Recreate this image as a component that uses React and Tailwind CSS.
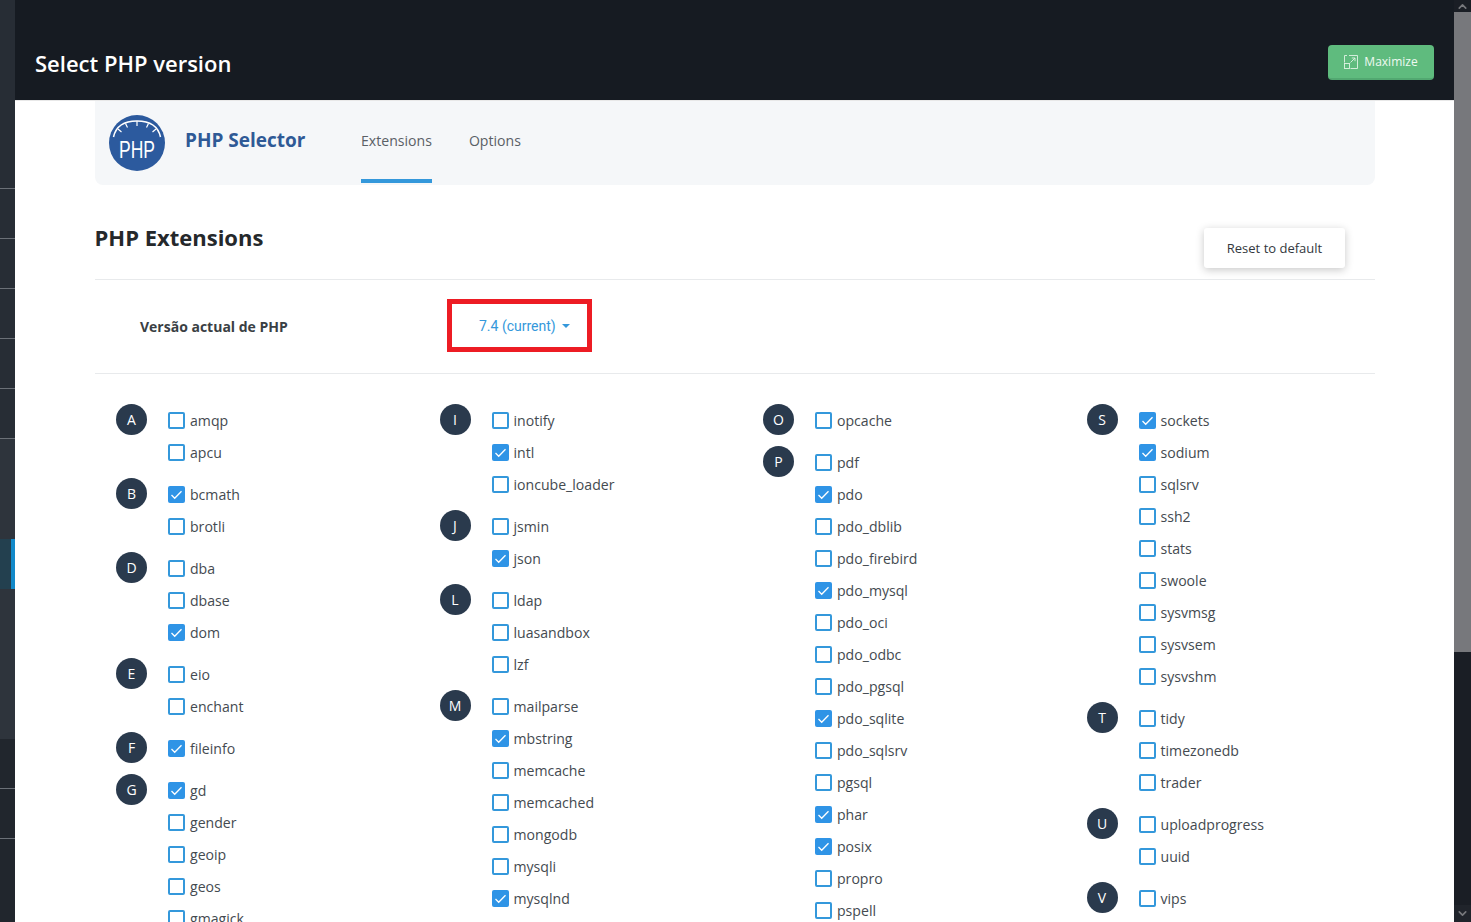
import React from 'react';
import { ChevronDown, ChevronUp } from 'lucide-react';

const columns = [
  [
    { letter: 'A', items: ['amqp', 'apcu'] },
    { letter: 'B', items: ['*bcmath', 'brotli'] },
    { letter: 'D', items: ['dba', 'dbase', '*dom'] },
    { letter: 'E', items: ['eio', 'enchant'] },
    { letter: 'F', items: ['*fileinfo'] },
    { letter: 'G', items: ['*gd', 'gender', 'geoip', 'geos', 'gmagick'] },
  ],
  [
    { letter: 'I', items: ['inotify', '*intl', 'ioncube_loader'] },
    { letter: 'J', items: ['jsmin', '*json'] },
    { letter: 'L', items: ['ldap', 'luasandbox', 'lzf'] },
    { letter: 'M', items: ['mailparse', '*mbstring', 'memcache', 'memcached', 'mongodb', 'mysqli', '*mysqlnd'] },
  ],
  [
    { letter: 'O', items: ['opcache'] },
    {
      letter: 'P',
      items: ['pdf', '*pdo', 'pdo_dblib', 'pdo_firebird', '*pdo_mysql', 'pdo_oci', 'pdo_odbc', 'pdo_pgsql', '*pdo_sqlite', 'pdo_sqlsrv', 'pgsql', '*phar', '*posix', 'propro', 'pspell'],
    },
  ],
  [
    { letter: 'S', items: ['*sockets', '*sodium', 'sqlsrv', 'ssh2', 'stats', 'swoole', 'sysvmsg', 'sysvsem', 'sysvshm'] },
    { letter: 'T', items: ['tidy', 'timezonedb', 'trader'] },
    { letter: 'U', items: ['uploadprogress', 'uuid'] },
    { letter: 'V', items: ['vips'] },
  ],
];

function Rail() {
  return (
    <div className="w-[15px] shrink-0 flex flex-col bg-[#272d35]">
      <div className="h-[189px] shrink-0 border-b border-[#6b7077]" />
      <div className="h-[50px] shrink-0 border-b border-[#6b7077]" />
      <div className="h-[50px] shrink-0 border-b border-[#6b7077]" />
      <div className="h-[50px] shrink-0 border-b border-[#6b7077]" />
      <div className="h-[50px] shrink-0 border-b border-[#6b7077]" />
      <div className="h-[50px] shrink-0 border-b border-[#6b7077]" />
      <div className="h-[300px] shrink-0 bg-[#2e343c] flex flex-col pt-[100px]">
        <div className="h-[50px] bg-[#23404f] flex justify-end">
          <div className="w-[4px] bg-[#1289c9]" />
        </div>
      </div>
      <div className="flex-1 bg-[#21262d]">
        <div className="h-[50px] border-b border-[#6b7077]" />
        <div className="h-[50px] border-b border-[#6b7077]" />
      </div>
    </div>
  );
}

function PhpLogo() {
  return (
    <svg width="56" height="56" viewBox="0 0 56 56" className="shrink-0">
      <circle cx="28" cy="28" r="28" fill="#2c5a9e" />
      <path d="M4.500 22 Q8 6 28 6 Q48 6 51.500 22" fill="none" stroke="#fff" strokeWidth="1.500" />
      <path d="M28 6v5M16.500 8.500l2 4M39.500 8.500l-2 4M9 14l3.500 3M47 14l-3.500 3" stroke="#fff" strokeWidth="1.200" />
      <text x="10" y="43" textLength="36" lengthAdjust="spacingAndGlyphs" fill="#fff" fontSize="24" fontFamily="'Liberation Sans', sans-serif">
        PHP
      </text>
    </svg>
  );
}

function Checkbox({ checked }) {
  if (checked) {
    return (
      <span className="w-[17px] h-[17px] shrink-0 rounded-[2px] bg-[#2f94e6] flex items-center justify-center">
        <svg width="15" height="15" viewBox="0 0 15 15" fill="none">
          <path d="M2.500 8l3.200 3.200 6.800-7" stroke="#fff" strokeWidth="1.300" />
        </svg>
      </span>
    );
  }
  return <span className="w-[17px] h-[17px] shrink-0 rounded-[2px] border-2 border-[#3498db] bg-white" />;
}

function Group({ letter, items }) {
  return (
    <div className="flex mb-[10px]">
      <div className="w-[31px] h-[31px] shrink-0 rounded-full bg-[#2a3a4d] text-white text-[14px] flex items-center justify-center">
        {letter}
      </div>
      <div className="ml-[21px] flex flex-col">
        {items.map((item) => {
          const checked = item.startsWith('*');
          return (
            <div key={item} className="h-8 flex items-center gap-[5px] pt-[1px] text-[14.100px] text-[#444a50]">
              <Checkbox checked={checked} />
              <span>{checked ? item.slice(1) : item}</span>
            </div>
          );
        })}
      </div>
    </div>
  );
}

export default function App() {
  return (
    <div className="h-[922px] flex overflow-hidden bg-white font-['Open_Sans',sans-serif]">
      <Rail />

      <div className="flex-1 min-w-0 flex flex-col">
        {/* Header */}
        <div className="h-[101px] shrink-0 bg-[#161b22] border-b border-[#e8e8e8] pl-[20px] pr-[20px] flex items-center justify-between">
          <h1 className="text-[22px] font-semibold text-white pt-[26px]">Select PHP version</h1>
          <button className="w-[106px] h-[35px] mt-[25px] rounded-[4px] bg-[#5fbb7e] border-b-2 border-[#52a871] flex items-center justify-center gap-[6px] text-[12px] font-normal text-[#eef9f1]">
            <svg width="14" height="14" viewBox="0 0 14 14" fill="none" stroke="#dff3e4" strokeWidth="0.900">
              <path d="M5 .5H13.500V13.500H6.500" />
              <path d="M.5 7.500V.5H3" />
              <rect x=".5" y="8.500" width="5" height="5" />
              <path d="M6.500 7.500L11 3M7.800 3H11V6.200" />
            </svg>
            Maximize
          </button>
        </div>

        <div className="flex-1 min-h-0 overflow-hidden pl-[80px] pr-[79px]">
          {/* Selector panel */}
          <div className="h-[84px] bg-[#f5f7f9] rounded-b-[8px] flex pl-[14px]">
            <div className="pt-[14px]">
              <PhpLogo />
            </div>
            <div className="ml-[20px] w-[176px] pt-[25px] text-[19px] font-bold text-[#2f5a96]">PHP Selector</div>
            <div className="flex gap-[37px] text-[14.100px] text-[#5a6066]">
              <div className="h-[82px] pt-[29px] border-b-4 border-[#3498db]">Extensions</div>
              <div className="h-[82px] pt-[29px]">Options</div>
            </div>
          </div>

          {/* Title row */}
          <div className="h-[95px] border-b border-[#e8eaec] flex justify-between pr-[30px]">
            <h2 className="pt-[36px] -ml-[0.5px] text-[22px] font-bold text-[#25282b]">PHP Extensions</h2>
            <button className="mt-[43px] w-[141px] h-[40px] pt-[1px] bg-white rounded-[3px] shadow-[0_2px_8px_rgba(0,0,0,0.22)] text-[13px] font-normal text-[#33383d]">
              Reset to default
            </button>
          </div>

          {/* Version row */}
          <div className="h-[94px] border-b border-[#e8eaec] flex items-start pt-[19px] pl-[45px]">
            <div className="w-[307px] pt-[17px] text-[14px] font-bold text-[#3a3f44]">Versão actual de PHP</div>
            <div className="w-[145px] h-[53px] border-[5px] border-[#ed1c24] flex items-center gap-[6px] pl-[27px] pt-[1px] font-['Roboto',sans-serif] text-[14px] text-[#3498db]">
              7.4 (current)
              <span className="w-0 h-0 border-x-[4px] border-x-transparent border-t-[4px] border-t-[#3498db]" />
            </div>
          </div>

          {/* Extension list */}
          <div className="grid grid-cols-[repeat(4,323.5px)] pl-[21px] pt-[30px]">
            {columns.map((groups, index) => (
              <div key={index}>
                {groups.map((group) => (
                  <Group key={group.letter} letter={group.letter} items={group.items} />
                ))}
              </div>
            ))}
          </div>
        </div>
      </div>

      {/* Scrollbar */}
      <div className="w-[17px] shrink-0 bg-[#1a1e25] flex flex-col">
        <div className="h-[12px] shrink-0 flex items-center justify-center">
          <ChevronUp size={13} strokeWidth={3} className="text-[#77787c]" />
        </div>
        <div className="h-[640px] shrink-0 bg-[#77787c]" />
        <div className="flex-1" />
        <div className="h-[17px] shrink-0 bg-[#20242b] flex items-center justify-center">
          <ChevronDown size={13} strokeWidth={3} className="text-[#77787c]" />
        </div>
      </div>
    </div>
  );
}
